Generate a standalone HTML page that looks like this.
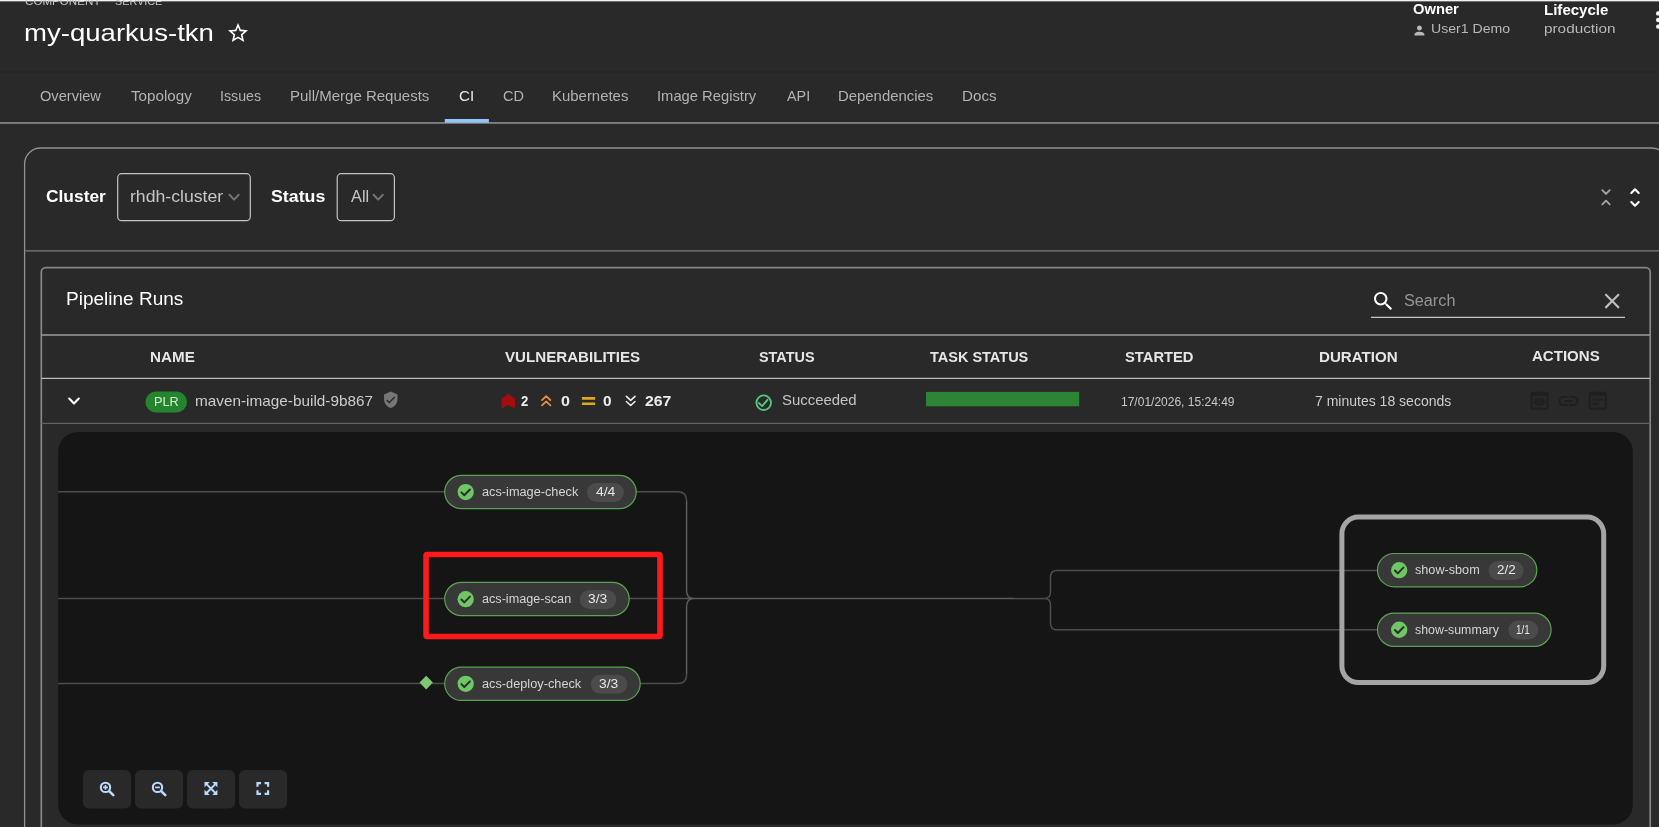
<!DOCTYPE html>
<html lang="en">
<head>
<meta charset="utf-8">
<title>my-quarkus-tkn - CI</title>
<style>
html,body{margin:0;padding:0;}
body{width:1659px;height:827px;overflow:hidden;background:#292929;position:relative;
  font-family:"Liberation Sans",sans-serif;}
#shapes{position:absolute;left:0;top:0;width:1659px;height:827px;display:block;}
.t{position:absolute;transform-origin:0 50%;white-space:pre;line-height:20px;font-family:"Liberation Sans",sans-serif;}
#texts{position:absolute;left:0;top:0;width:1659px;height:827px;will-change:transform;}

</style>
</head>
<body>
<svg id="shapes" width="1659" height="827" viewBox="0 0 1659 827">
  <!-- top window edge -->
  <rect x="0" y="0" width="1659" height="1.35" fill="#f2f2f2"/>

  <!-- favourite star -->
  <g transform="translate(226,21)" fill="#ffffff">
    <path d="M22 9.24l-7.19-.62L12 2 9.19 8.63 2 9.24l5.46 4.73L5.82 21 12 17.27 18.18 21l-1.63-7.03L22 9.24zM12 15.4l-3.76 2.27 1-4.28-3.32-2.88 4.38-.38L12 6.1l1.71 4.04 4.38.38-3.32 2.88 1 4.28L12 15.4z"/>
  </g>
  <!-- owner person icon -->
  <g transform="translate(1412,23) scale(0.62)" fill="#b8b8b8">
    <path d="M12 12c2.21 0 4-1.790 4-4s-1.790-4-4-4-4 1.790-4 4 1.790 4 4 4zm0 2c-2.670 0-8 1.340-8 4v2h16v-2c0-2.660-5.330-4-8-4z"/>
  </g>
  <!-- kebab -->
  <g fill="#ffffff">
    <circle cx="1658.2" cy="13.4" r="2.2"/><circle cx="1658.2" cy="20" r="2.2"/><circle cx="1658.2" cy="26.6" r="2.2"/>
  </g>

  <!-- header shadow -->
  <rect x="0" y="71.500" width="1659" height="1" fill="#252525"/>
  <!-- tab bar -->
  <rect x="0" y="122" width="1659" height="1.9" fill="#7d7d7d"/>
  <rect x="444.8" y="119" width="44.1" height="3.7" fill="#92c5f9"/>

  <!-- outer card -->
  <rect x="24.6" y="148" width="1643" height="760" rx="16" ry="16" fill="none" stroke="#929292" stroke-width="1.3"/>
  <line x1="24.6" y1="250.8" x2="1659" y2="250.8" stroke="#7c7c7c" stroke-width="1.3"/>

  <!-- selects -->
  <rect x="117.7" y="173.7" width="132.6" height="47" rx="4" fill="none" stroke="#c4c4c4" stroke-width="1.2"/>
  <rect x="337.2" y="173.7" width="57.2" height="47" rx="4" fill="none" stroke="#c4c4c4" stroke-width="1.2"/>
  <path d="M229.500 194.800l4.600 4.800 4.600-4.800" fill="none" stroke="#747474" stroke-width="2" stroke-linecap="round" stroke-linejoin="round"/>
  <path d="M373.600 194.800l4.600 4.800 4.600-4.800" fill="none" stroke="#747474" stroke-width="2" stroke-linecap="round" stroke-linejoin="round"/>

  <!-- collapse / expand all -->
  <g fill="none" stroke="#a4a4a4" stroke-width="1.9" stroke-linecap="round" stroke-linejoin="round">
    <path d="M1602.300 190.200l3.700 3.700 3.700-3.700"/><path d="M1602.300 204.400l3.700-3.700 3.700 3.700"/>
  </g>
  <g fill="none" stroke="#ffffff" stroke-width="2.100" stroke-linecap="round" stroke-linejoin="round">
    <path d="M1631.300 193l3.700-3.700 3.700 3.700"/><path d="M1631.300 202l3.700 3.700 3.700-3.700"/>
  </g>

  <!-- inner card -->
  <rect x="41.3" y="267.6" width="1608.9" height="640" rx="4.500" ry="4.500" fill="none" stroke="#868686" stroke-width="1.700"/>
  <line x1="41.3" y1="335" x2="1650.2" y2="335" stroke="#9c9c9c" stroke-width="1.3"/>
  <line x1="41.3" y1="378.4" x2="1650.2" y2="378.4" stroke="#bcbcbc" stroke-width="1.3"/>
  <line x1="41.3" y1="423.3" x2="1650.2" y2="423.3" stroke="#626262" stroke-width="1.3"/>

  <!-- search -->
  <g transform="translate(1370.900,288.900) scale(1.035)" fill="#ffffff">
    <path d="M15.5 14h-.79l-.28-.27C15.410 12.590 16 11.110 16 9.500 16 5.910 13.090 3 9.500 3S3 5.910 3 9.500 5.910 16 9.500 16c1.610 0 3.090-.59 4.230-1.570l.27.28v.79l5 4.990L20.490 19l-4.990-5zm-6 0C7.010 14 5 11.990 5 9.500S7.010 5 9.500 5 14 7.010 14 9.500 11.990 14 9.500 14z"/>
  </g>
  <g transform="translate(1599.300,288.200) scale(1.075)" fill="#bebebe">
    <path d="M19 6.410L17.590 5 12 10.590 6.410 5 5 6.410 10.590 12 5 17.590 6.410 19 12 13.410 17.590 19 19 17.590 13.410 12z"/>
  </g>
  <line x1="1371" y1="317.4" x2="1625" y2="317.4" stroke="#c2c2c2" stroke-width="1.2"/>

  <!-- row chevron -->
  <path d="M69.2 398.6l4.8 4.8 4.8-4.800" fill="none" stroke="#ffffff" stroke-width="2.1" stroke-linecap="round" stroke-linejoin="round"/>
  <!-- PLR badge -->
  <rect x="145.4" y="391.600" width="41.600" height="20.800" rx="10.400" fill="#23862f"/>
  <!-- signed shield -->
  <g transform="translate(381.8,390.8) scale(0.75)" fill="#767676">
    <path d="M12 1L3 5v6c0 5.550 3.840 10.740 9 12 5.160-1.260 9-6.450 9-12V5l-9-4zm-2 16l-4-4 1.410-1.410L10 14.170l6.590-6.590L18 9l-8 8z"/>
  </g>

  <!-- vulnerabilities icons -->
  <path d="M501.6 398.400l6.700-4.300 6.700 4.300v10l-6.700-3.400-6.700 3.400z" fill="#a30d0d"/>
  <g fill="none" stroke="#f0913a" stroke-width="1.700" stroke-linecap="round" stroke-linejoin="round">
    <path d="M542 400.200l4.200-4.100 4.200 4.100"/><path d="M542 405.400l4.200-4.100 4.200 4.100"/>
  </g>
  <g fill="#dcaa22"><rect x="581.9" y="397.100" width="13.300" height="2.600" rx="0.500"/><rect x="581.9" y="402.500" width="13.300" height="2.600" rx="0.500"/></g>
  <g fill="none" stroke="#ededed" stroke-width="1.600" stroke-linecap="round" stroke-linejoin="round">
    <path d="M626.400 396.300l4.300 4 4.300-4"/><path d="M626.400 401.500l4.300 4 4.300-4"/>
  </g>

  <!-- status -->
  <circle cx="763.700" cy="402.700" r="7.300" fill="none" stroke="#55c583" stroke-width="1.800"/>
  <path d="M758.700 402.900l3.400 3.200 5.400-6.300" fill="none" stroke="#55c583" stroke-width="1.900" stroke-linecap="round" stroke-linejoin="round"/>

  <!-- task status bar -->
  <rect x="926" y="391.900" width="153.200" height="14.400" fill="#2b8535"/>

  <!-- disabled actions -->
  <g fill="#1f1f1f">
    <g transform="translate(1527.500,388.800)">
      <path d="M19 3H5c-1.110 0-2 .9-2 2v14c0 1.100.89 2 2 2h14c1.100 0 2-.9 2-2V5c0-1.100-.89-2-2-2zm0 16H5V7h14v12zm-5.500-6c0 .83-.67 1.500-1.500 1.500s-1.500-.67-1.500-1.500.67-1.500 1.500-1.500 1.500.67 1.500 1.500zM12 9c-2.730 0-5.060 1.660-6 4 .94 2.340 3.270 4 6 4s5.060-1.660 6-4c-.94-2.340-3.270-4-6-4zm0 6.500c-1.380 0-2.500-1.120-2.500-2.500s1.120-2.500 2.500-2.500 2.500 1.120 2.500 2.500-1.120 2.500-2.500 2.500z"/>
    </g>
    <g transform="translate(1556.400,388.900)">
      <path d="M3.900 12c0-1.710 1.390-3.100 3.100-3.100h4V7H7c-2.760 0-5 2.240-5 5s2.240 5 5 5h4v-1.900H7c-1.710 0-3.100-1.390-3.100-3.100zM8 13h8v-2H8v2zm9-6h-4v1.900h4c1.710 0 3.100 1.390 3.100 3.100s-1.390 3.100-3.100 3.100h-4V17h4c2.760 0 5-2.240 5-5s-2.240-5-5-5z"/>
    </g>
    <g transform="translate(1585.800,388.800)">
      <path d="M19 3H5c-1.100 0-2 .9-2 2v14c0 1.100.9 2 2 2h14c1.100 0 2-.9 2-2V5c0-1.100-.9-2-2-2zm0 16H5V7h14v12zm-2-7H7v-2h10v2zm-4 4H7v-2h6v2z"/>
    </g>
  </g>

  <!-- pipeline visualization -->
  <path d="M78 431.900H1613a19.800 19.800 0 0 1 19.800 19.800V804.600a19.800 19.800 0 0 1-19.800 19.800H78a19.800 19.800 0 0 1-19.800-19.800V451.700A19.800 19.800 0 0 1 78 431.900z" fill="#151515"/>
  <g fill="none" stroke="#4e4e4e" stroke-width="1.500">
    <path d="M58.200 491.800H445"/>
    <path d="M58.200 598.600H686"/>
    <path d="M58.200 683.600H445"/>
    <path d="M636 491.800H677.600q9 0 9 9"/>
    <path d="M640 683.600H677.600q9 0 9-9"/>
    <path d="M1014.500 598.600H1044.500"/>
    <path d="M1044.500 598.600q6 0 6-6.500V577q0-6.600 6.600-6.600H1378"/>
    <path d="M1044.500 598.600q6 0 6 6.500V623.200q0 6.600 6.600 6.600H1378"/>
  </g>
  <g fill="none" stroke="#5c5c5c" stroke-width="1.500">
    <path d="M686.600 500.800V590.500q0 7 6 8.100"/>
    <path d="M686.600 674.600V606.700q0-7 6-8.100"/>
    <path d="M686 598.600H1014.500"/>
  </g>
  <!-- highlight rectangle -->
  <rect x="426.050" y="554.450" width="233.950" height="82.050" rx="1" fill="none" stroke="#fd1a1a" stroke-width="5.600"/>
  <!-- finally group -->
  <rect x="1341.900" y="517.100" width="261.800" height="165.500" rx="16.500" fill="none" stroke="#a5a5a5" stroke-width="5"/>

  <!-- when diamond -->
  <path d="M419.500 682.600l6.700-6.900 6.700 6.900-6.700 6.900z" fill="#7cc674"/>

  <!-- task nodes -->
  <g fill="#383838" stroke="#5ba352" stroke-width="1.200">
    <rect x="444.700" y="475.350" width="191.500" height="33.300" rx="16.650"/>
    <rect x="444.700" y="582.350" width="184.500" height="33.300" rx="16.650"/>
    <rect x="444.700" y="667.150" width="195.500" height="33.300" rx="16.650"/>
    <rect x="1377.500" y="553.500" width="159.300" height="33.300" rx="16.650"/>
    <rect x="1377.500" y="613.100" width="173.600" height="33.300" rx="16.650"/>
  </g>
  <!-- count badges -->
  <g fill="#4b4b4b">
    <rect x="586.900" y="483" width="37" height="19" rx="9.500"/>
    <rect x="579.800" y="590" width="36.500" height="19" rx="9.500"/>
    <rect x="590.800" y="674.700" width="36.500" height="19" rx="9.500"/>
    <rect x="1488.600" y="561" width="35" height="19" rx="9.500"/>
    <rect x="1508.400" y="620.600" width="29.800" height="19" rx="9.500"/>
  </g>
  <!-- status check icons -->
  <defs>
    <g id="ok">
      <circle cx="0" cy="0" r="8.150" fill="#6ec664"/>
      <path d="M-4.300 0.300l2.900 2.900 5.600-5.700" fill="none" stroke="#2e2e2e" stroke-width="2" stroke-linecap="round" stroke-linejoin="round"/>
    </g>
  </defs>
  <use href="#ok" x="465.700" y="492.050"/>
  <use href="#ok" x="465.700" y="599.150"/>
  <use href="#ok" x="465.700" y="683.850"/>
  <use href="#ok" x="1399.200" y="570.150"/>
  <use href="#ok" x="1399.200" y="629.750"/>

  <!-- zoom controls -->
  <g fill="#292929">
    <rect x="83" y="770" width="48.100" height="38.400" rx="6"/>
    <rect x="135" y="770" width="48.100" height="38.400" rx="6"/>
    <rect x="187" y="770" width="48.100" height="38.400" rx="6"/>
    <rect x="239" y="770" width="48.100" height="38.400" rx="6"/>
  </g>
  <g fill="none" stroke="#b9dafc" stroke-linecap="round">
    <circle cx="105.500" cy="787.400" r="4.650" stroke-width="2.100"/>
    <path d="M109.400 791.300l3.900 3.900" stroke-width="2.600"/>
    <path d="M103.100 787.400h4.800M105.500 785v4.800" stroke-width="1.700" stroke-linecap="butt"/>
    <circle cx="157.500" cy="787.400" r="4.650" stroke-width="2.100"/>
    <path d="M161.400 791.300l3.900 3.900" stroke-width="2.600"/>
    <path d="M155.100 787.400h4.800" stroke-width="1.700" stroke-linecap="butt"/>
  </g>
  <g fill="#b9dafc" stroke="#b9dafc" stroke-width="2" stroke-linecap="round">
    <path d="M206.800 784.400l8.300 8.300M215.100 784.400l-8.300 8.300"/>
    <path d="M204.500 782.100h5.200l-5.200 5.200zM217.400 782.100h-5.200l5.200 5.200zM204.500 794.900h5.200l-5.200-5.200zM217.400 794.900h-5.200l5.200-5.200z" stroke="none"/>
  </g>
  <g fill="none" stroke="#b9dafc" stroke-width="2.200" stroke-linecap="butt" stroke-linejoin="miter">
    <path d="M257.500 786.700v-3.500h3.500M264.600 783.200h3.500v3.500M268.100 790.300v3.500h-3.500M261 793.800h-3.500v-3.500"/>
  </g>
</svg>

<div id="texts">
<span class="t" style="left:25.30px;top:-8.81px;font-size:11px;font-weight:400;color:#c4c4c4;transform:scaleX(1.0556) rotate(0.02deg);">COMPONENT</span>
<span class="t" style="left:102.60px;top:-13.21px;font-size:11px;font-weight:400;color:#c4c4c4;transform:scaleX(0.9000) rotate(0.02deg);">—</span>
<span class="t" style="left:115.00px;top:-8.81px;font-size:11px;font-weight:400;color:#c4c4c4;transform:scaleX(0.9833) rotate(0.02deg);">SERVICE</span>
<span class="t" style="left:24.15px;top:22.88px;font-size:24px;font-weight:400;color:#ffffff;transform:scaleX(1.1485) rotate(0.02deg);">my-quarkus-tkn</span>
<span class="t" style="left:1413.30px;top:-0.75px;font-size:14px;font-weight:700;color:#ffffff;transform:scaleX(1.0523) rotate(0.02deg);">Owner</span>
<span class="t" style="left:1544.40px;top:0.45px;font-size:14px;font-weight:700;color:#ffffff;transform:scaleX(1.0750) rotate(0.02deg);">Lifecycle</span>
<span class="t" style="left:1430.94px;top:18.89px;font-size:13.3px;font-weight:400;color:#b8b8b8;transform:scaleX(1.0608) rotate(0.02deg);">User1 Demo</span>
<span class="t" style="left:1544.40px;top:18.89px;font-size:13.3px;font-weight:400;color:#b8b8b8;transform:scaleX(1.1516) rotate(0.02deg);">production</span>
<span class="t" style="left:39.80px;top:86.48px;font-size:14.5px;font-weight:400;color:#b3b3b3;transform:scaleX(1.0082) rotate(0.02deg);">Overview</span>
<span class="t" style="left:131.00px;top:86.48px;font-size:14.5px;font-weight:400;color:#b3b3b3;transform:scaleX(1.0466) rotate(0.02deg);">Topology</span>
<span class="t" style="left:220.42px;top:86.48px;font-size:14.5px;font-weight:400;color:#b3b3b3;transform:scaleX(0.9805) rotate(0.02deg);">Issues</span>
<span class="t" style="left:289.96px;top:86.48px;font-size:14.5px;font-weight:400;color:#b3b3b3;transform:scaleX(1.0351) rotate(0.02deg);">Pull/Merge Requests</span>
<span class="t" style="left:459.00px;top:86.48px;font-size:14.5px;font-weight:400;color:#ececec;transform:scaleX(1.0429) rotate(0.02deg);">CI</span>
<span class="t" style="left:502.70px;top:86.48px;font-size:14.5px;font-weight:400;color:#b3b3b3;transform:scaleX(1.0000) rotate(0.02deg);">CD</span>
<span class="t" style="left:552.37px;top:86.48px;font-size:14.5px;font-weight:400;color:#b3b3b3;transform:scaleX(1.0301) rotate(0.02deg);">Kubernetes</span>
<span class="t" style="left:657.28px;top:86.48px;font-size:14.5px;font-weight:400;color:#b3b3b3;transform:scaleX(1.0175) rotate(0.02deg);">Image Registry</span>
<span class="t" style="left:786.60px;top:86.48px;font-size:14.5px;font-weight:400;color:#b3b3b3;transform:scaleX(0.9913) rotate(0.02deg);">API</span>
<span class="t" style="left:837.97px;top:86.48px;font-size:14.5px;font-weight:400;color:#b3b3b3;transform:scaleX(1.0272) rotate(0.02deg);">Dependencies</span>
<span class="t" style="left:961.85px;top:86.48px;font-size:14.5px;font-weight:400;color:#b3b3b3;transform:scaleX(1.0469) rotate(0.02deg);">Docs</span>
<span class="t" style="left:46.30px;top:186.28px;font-size:16.5px;font-weight:700;color:#ffffff;transform:scaleX(1.0526) rotate(0.02deg);">Cluster</span>
<span class="t" style="left:271.40px;top:186.28px;font-size:16.5px;font-weight:700;color:#ffffff;transform:scaleX(1.0780) rotate(0.02deg);">Status</span>
<span class="t" style="left:130.17px;top:187.29px;font-size:15.6px;font-weight:400;color:#c6c6c6;transform:scaleX(1.1305) rotate(0.02deg);">rhdh-cluster</span>
<span class="t" style="left:350.60px;top:187.29px;font-size:15.6px;font-weight:400;color:#c6c6c6;transform:scaleX(1.0471) rotate(0.02deg);">All</span>
<span class="t" style="left:65.71px;top:288.75px;font-size:19.2px;font-weight:400;color:#ffffff;transform:scaleX(0.9915) rotate(0.02deg);">Pipeline Runs</span>
<span class="t" style="left:1403.50px;top:291.06px;font-size:16px;font-weight:400;color:#969696;transform:scaleX(1.0140) rotate(0.02deg);">Search</span>
<span class="t" style="left:149.50px;top:347.38px;font-size:14.5px;font-weight:700;color:#e6e6e6;transform:scaleX(1.0488) rotate(0.02deg);">NAME</span>
<span class="t" style="left:505.30px;top:347.38px;font-size:14.5px;font-weight:700;color:#e6e6e6;transform:scaleX(1.0423) rotate(0.02deg);">VULNERABILITIES</span>
<span class="t" style="left:758.50px;top:347.38px;font-size:14.5px;font-weight:700;color:#e6e6e6;transform:scaleX(0.9946) rotate(0.02deg);">STATUS</span>
<span class="t" style="left:930.40px;top:347.38px;font-size:14.5px;font-weight:700;color:#e6e6e6;transform:scaleX(1.0000) rotate(0.02deg);">TASK STATUS</span>
<span class="t" style="left:1124.80px;top:347.38px;font-size:14.5px;font-weight:700;color:#e6e6e6;transform:scaleX(1.0164) rotate(0.02deg);">STARTED</span>
<span class="t" style="left:1318.80px;top:347.38px;font-size:14.5px;font-weight:700;color:#e6e6e6;transform:scaleX(1.0427) rotate(0.02deg);">DURATION</span>
<span class="t" style="left:1531.80px;top:346.18px;font-size:14.5px;font-weight:700;color:#e6e6e6;transform:scaleX(1.0369) rotate(0.02deg);">ACTIONS</span>
<span class="t" style="left:153.62px;top:391.90px;font-size:13px;font-weight:400;color:#d8eed8;transform:scaleX(0.9792) rotate(0.02deg);">PLR</span>
<span class="t" style="left:194.74px;top:391.28px;font-size:14.5px;font-weight:400;color:#cccccc;transform:scaleX(1.0569) rotate(0.02deg);">maven-image-build-9b867</span>
<span class="t" style="left:520.50px;top:391.45px;font-size:14px;font-weight:700;color:#ececec;transform:scaleX(0.9375) rotate(0.02deg);">2</span>
<span class="t" style="left:561.10px;top:391.45px;font-size:14px;font-weight:700;color:#ececec;transform:scaleX(1.1500) rotate(0.02deg);">0</span>
<span class="t" style="left:602.80px;top:391.45px;font-size:14px;font-weight:700;color:#ececec;transform:scaleX(1.1000) rotate(0.02deg);">0</span>
<span class="t" style="left:645.00px;top:391.45px;font-size:14px;font-weight:700;color:#ececec;transform:scaleX(1.1304) rotate(0.02deg);">267</span>
<span class="t" style="left:781.90px;top:390.28px;font-size:14.5px;font-weight:400;color:#c4c4c4;transform:scaleX(1.0292) rotate(0.02deg);">Succeeded</span>
<span class="t" style="left:1120.80px;top:392.27px;font-size:12.5px;font-weight:400;color:#c8c8c8;transform:scaleX(0.9610) rotate(0.02deg);">17/01/2026, 15:24:49</span>
<span class="t" style="left:1314.70px;top:391.18px;font-size:14.5px;font-weight:400;color:#cccccc;transform:scaleX(0.9660) rotate(0.02deg);">7 minutes 18 seconds</span>
<span class="t" style="left:481.80px;top:482.44px;font-size:12px;font-weight:400;color:#d4d4d4;transform:scaleX(1.0615) rotate(0.02deg);">acs-image-check</span>
<span class="t" style="left:595.50px;top:482.44px;font-size:12px;font-weight:400;color:#e6e6e6;transform:scaleX(1.1588) rotate(0.02deg);">4/4</span>
<span class="t" style="left:481.80px;top:589.14px;font-size:12px;font-weight:400;color:#d4d4d4;transform:scaleX(1.0529) rotate(0.02deg);">acs-image-scan</span>
<span class="t" style="left:588.00px;top:589.14px;font-size:12px;font-weight:400;color:#e6e6e6;transform:scaleX(1.1471) rotate(0.02deg);">3/3</span>
<span class="t" style="left:481.80px;top:673.84px;font-size:12px;font-weight:400;color:#d4d4d4;transform:scaleX(1.0628) rotate(0.02deg);">acs-deploy-check</span>
<span class="t" style="left:599.00px;top:673.84px;font-size:12px;font-weight:400;color:#e6e6e6;transform:scaleX(1.1471) rotate(0.02deg);">3/3</span>
<span class="t" style="left:1415.10px;top:560.34px;font-size:12px;font-weight:400;color:#d4d4d4;transform:scaleX(1.0541) rotate(0.02deg);">show-sbom</span>
<span class="t" style="left:1496.60px;top:560.34px;font-size:12px;font-weight:400;color:#e6e6e6;transform:scaleX(1.1176) rotate(0.02deg);">2/2</span>
<span class="t" style="left:1415.10px;top:619.94px;font-size:12px;font-weight:400;color:#d4d4d4;transform:scaleX(1.0317) rotate(0.02deg);">show-summary</span>
<span class="t" style="left:1516.40px;top:619.94px;font-size:12px;font-weight:400;color:#e6e6e6;transform:scaleX(0.8176) rotate(0.02deg);">1/1</span>
</div>
</body>
</html>
